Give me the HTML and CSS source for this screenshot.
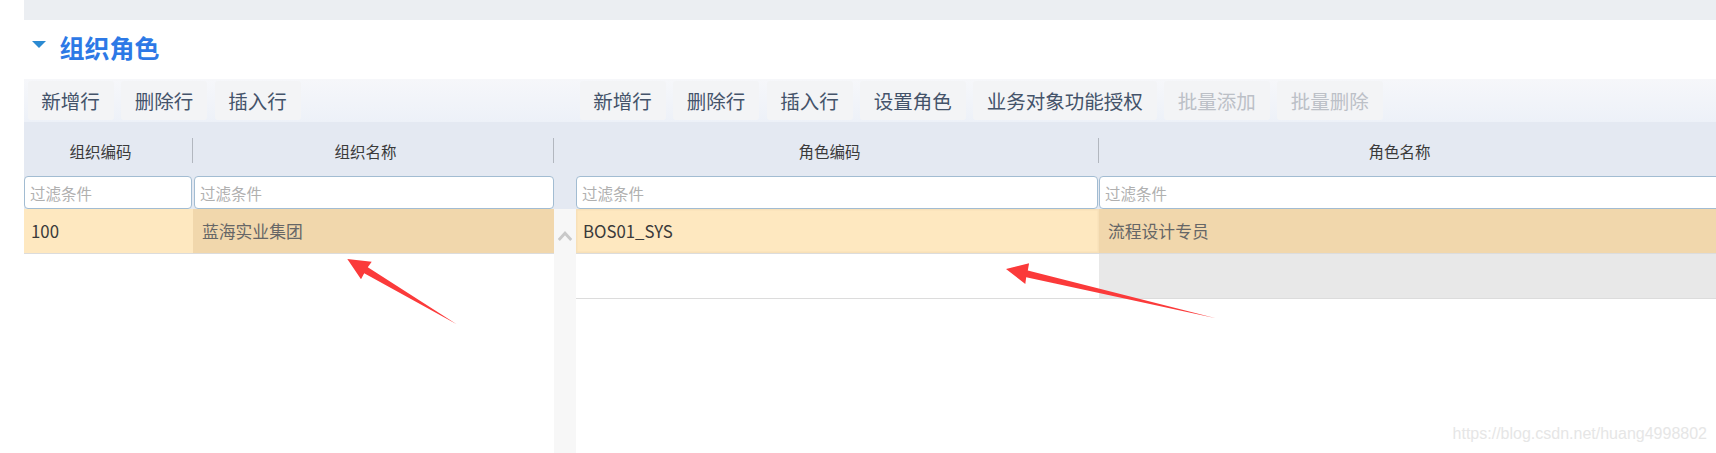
FILE: index.html
```html
<!DOCTYPE html>
<html lang="zh-CN">
<head>
<meta charset="utf-8">
<title>组织角色</title>
<link rel="stylesheet" href="styles.css">
</head>
<body>
<div class="page">
  <div class="topbar"></div>
  <div class="section-head">
    <span class="caret"></span>
    <h2 class="section-title">组织角色</h2>
  </div>
  <div class="panels">
    <div class="panel panel-left">
      <div class="toolbar">
        <button class="btn">新增行</button>
        <button class="btn">删除行</button>
        <button class="btn">插入行</button>
      </div>
      <div class="grid grid-left">
        <div class="hcell sep">组织编码</div>
        <div class="hcell sep">组织名称</div>
        <div class="fcell first"><input class="filter" placeholder="过滤条件"></div>
        <div class="fcell second"><input class="filter" placeholder="过滤条件"></div>
        <div class="dcell code">100</div>
        <div class="dcell name">蓝海实业集团</div>
      </div>
    </div>
    <div class="gutter">
      <div class="gutter-bar"></div>
      <div class="gutter-head"></div>
      <div class="scroll">
        <svg class="chev" width="16" height="12" viewBox="0 0 16 12"><polyline points="1.8,10 8,3.2 14.2,10" fill="none" stroke="#c9c9c9" stroke-width="2.8" stroke-linejoin="miter"/></svg>
      </div>
    </div>
    <div class="panel panel-right">
      <div class="toolbar">
        <button class="btn">新增行</button>
        <button class="btn">删除行</button>
        <button class="btn">插入行</button>
        <button class="btn">设置角色</button>
        <button class="btn">业务对象功能授权</button>
        <button class="btn disabled">批量添加</button>
        <button class="btn disabled">批量删除</button>
      </div>
      <div class="grid grid-right">
        <div class="hcell sep">角色编码</div>
        <div class="hcell">角色名称</div>
        <div class="fcell first"><input class="filter" placeholder="过滤条件"></div>
        <div class="fcell last"><input class="filter" placeholder="过滤条件"></div>
        <div class="dcell code sel">BOS01_SYS</div>
        <div class="dcell name">流程设计专员</div>
        <div class="dcell blank"></div>
        <div class="dcell blank-grey"></div>
      </div>
    </div>
  </div>
</div>
<svg class="annot" width="1716" height="453" viewBox="0 0 1716 453">
  <polygon fill="#fb3a3a" points="347.3,259 371.7,261.7 367.8,267.3 456.7,324.3 364.2,273.3 361,279.3"/>
  <polygon fill="#fb3a3a" points="1006,269 1029.1,263.3 1027.8,270.5 1215.9,318.3 1026.2,277.3 1025.3,284"/>
</svg>
<div class="watermark">https://blog.csdn.net/huang4998802</div>
</body>
</html>
```

FILE: styles.css
```css
* { box-sizing: border-box; }
html, body { margin: 0; padding: 0; }
body {
  width: 1716px;
  height: 453px;
  overflow: hidden;
  background: #fff;
  position: relative;
  font-family: "Noto Sans CJK SC", "Microsoft YaHei", sans-serif;
}
.page {
  height: 453px;
  display: flex;
  flex-direction: column;
  padding-left: 24px;
}
.topbar {
  flex: none;
  height: 20px;
  background: #ebeef2;
}
.section-head {
  flex: none;
  height: 59px;
  display: flex;
  align-items: center;
  padding: 0 0 4px 8.3px;
}
.caret {
  width: 0;
  height: 0;
  border-left: 7.2px solid transparent;
  border-right: 7.2px solid transparent;
  border-top: 7px solid #2b8ad2;
  margin: 0 13.3px 7px 0;
}
.section-title {
  margin: 0;
  font-size: 25px;
  line-height: 25px;
  font-weight: 700;
  color: #2d79e6;
}
.panels {
  flex: 1;
  display: flex;
  min-height: 0;
}
.panel {
  display: flex;
  flex-direction: column;
}
.panel-left { width: 530px; flex: none; }
.panel-right { flex: 1; min-width: 0; }
.gutter {
  width: 22px;
  flex: none;
  display: flex;
  flex-direction: column;
}
.toolbar, .gutter-bar {
  flex: none;
  height: 43px;
  background: linear-gradient(#f6f7fa, #edf1f8);
}
.toolbar {
  display: flex;
  gap: 7.5px;
  padding: 1.7px 0 2px 3.5px;
}
.btn {
  border: 0;
  border-radius: 3px;
  background: #f3f4f6;
  padding: 0 13.75px;
  font-family: "Noto Sans CJK SC", "Microsoft YaHei", sans-serif;
  font-size: 19.5px;
  line-height: 1;
  color: #44536a;
  white-space: nowrap;
}
.btn.disabled { color: #bcc0c7; }
.gutter-head {
  flex: none;
  height: 87px;
  background: #e4e9f2;
}
.scroll {
  flex: 1;
  background: #f7f7f7;
  display: flex;
  justify-content: center;
  padding-top: 21px;
}
.chev { display: block; }
.grid {
  display: grid;
  grid-auto-rows: auto;
}
.grid-left { grid-template-columns: 169px 361px; }
.grid-right { grid-template-columns: 523px 1fr; }
.hcell {
  height: 54px;
  background: #e4e9f2;
  display: flex;
  align-items: center;
  justify-content: center;
  padding: 3px 16px 0 0;
  font-size: 15.5px;
  color: #3a3a3a;
  position: relative;
}
.hcell.sep::after {
  content: "";
  position: absolute;
  right: 0;
  top: 16px;
  width: 1px;
  height: 25px;
  background: #b2b7bf;
}
.fcell {
  height: 33px;
  background: #e4e9f2;
}
.fcell.first { padding-right: 1px; }
.fcell.second { padding-left: 1px; }
.fcell.last { margin-right: -6px; }
.filter {
  display: block;
  width: 100%;
  height: 33px;
  margin: 0;
  border: 1px solid #a2bcd2;
  border-radius: 4px;
  background: #fff;
  padding: 0 5px;
  font-family: "Noto Sans CJK SC", "Microsoft YaHei", sans-serif;
  font-size: 15.5px;
  color: #333;
  outline: none;
}
.filter::placeholder { color: #b0b0b0; }
.dcell {
  height: 45px;
  border-bottom: 1px solid #dcdcdc;
  line-height: 44px;
  font-size: 16.8px;
  white-space: nowrap;
  overflow: hidden;
}
.dcell.code {
  background: #fee8c0;
  padding-left: 7px;
  color: #3a3a3a;
}
.dcell.name {
  background: #f1d7ac;
  padding-left: 9px;
  color: #666;
}
.dcell.sel { box-shadow: inset 0 0 0 1.5px #f7e0b8; }
.dcell.blank { background: #fff; }
.dcell.blank-grey { background: #e8e8e8; }
.annot {
  position: absolute;
  left: 0;
  top: 0;
  pointer-events: none;
}
.watermark {
  position: absolute;
  top: 426px;
  right: 9px;
  font-family: "Liberation Sans", Arial, sans-serif;
  font-size: 16px;
  line-height: 16px;
  color: #e6e6e6;
  white-space: nowrap;
}
```
